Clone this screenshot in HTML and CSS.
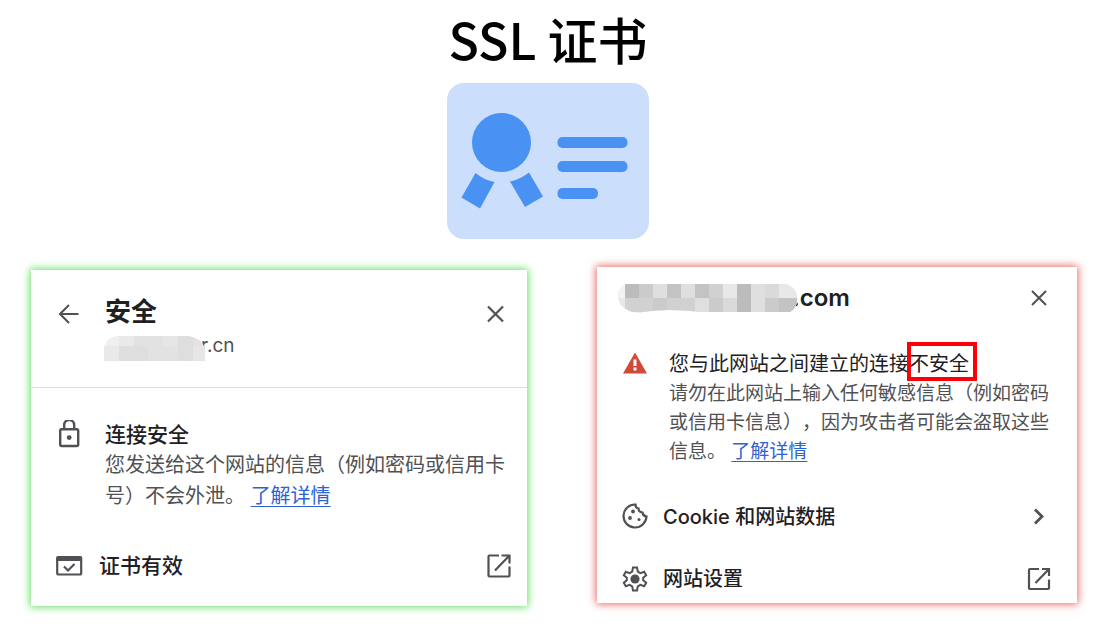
FILE: index.html
```html
<!DOCTYPE html>
<html lang="zh-CN">
<head>
  <meta charset="UTF-8">
  <meta name="viewport" content="width=device-width, initial-scale=1.0">
  <title>SSL 证书</title>
  <link rel="stylesheet" href="styles.css">
</head>
<body>
  <header class="hero">
    <h1>SSL 证书</h1>
    <svg class="certificate" viewBox="0 0 202 156" aria-hidden="true">
      <rect width="202" height="156" rx="17" fill="#cbdefc"/>
      <g fill="#4a91f4">
        <circle cx="54.500" cy="59.500" r="29.500"/>
        <path d="M28.500 90Q37 97 47.500 99L33 125.500 14.500 114.500Z"/>
        <path d="M82 89.500Q73 96.500 63 98.500L78 124 96 113.500Z"/>
        <rect x="110.500" y="54" width="70" height="11" rx="5"/>
        <rect x="110.500" y="78" width="70" height="11" rx="5"/>
        <rect x="110.500" y="105" width="40.500" height="11" rx="5"/>
      </g>
    </svg>
  </header>

  <main class="cards">
    <section class="card secure">
      <div class="card-head">
        <button class="icon-btn" type="button" aria-label="返回">
          <svg class="icon" viewBox="0 0 28 28"><path d="M23.500 14H5.500M14 5L5 14l9 9" stroke-width="2"/></svg>
        </button>
        <div class="card-title">
          <h2>安全</h2>
          <p class="domain">
            <svg class="mask" viewBox="0 0 101 25" aria-hidden="true">
              <clipPath id="mask-cn"><path d="M0 25V11Q4 0 16 0H83Q101 2 101 16V25Z"/></clipPath>
              <g clip-path="url(#mask-cn)">
                <path fill="#e2e2e2" d="M0 0h101v25H0z"/>
                <path fill="#efefef" d="M0 0h15v10H0z"/>
                <path fill="#e9e9e9" d="M15 0h15v10H15zM0 10h15v15H0z"/>
                <path fill="#dedede" d="M15 10h29v15H15zM74 0h15v25H74z"/>
                <path fill="#e6e6e6" d="M59 0h15v10H59zM89 10h12v15H89z"/>
              </g>
            </svg>r.cn
          </p>
        </div>
        <button class="icon-btn" type="button" aria-label="关闭">
          <svg class="icon" viewBox="0 0 28 28"><path d="M6 6.500l15 15M21 6.500l-15 15" stroke-width="2.200"/></svg>
        </button>
      </div>

      <div class="info">
        <svg class="icon" viewBox="0 0 28 28" aria-hidden="true">
          <rect x="5.200" y="9.200" width="18" height="16.800" rx="1.500" stroke-width="2.400"/>
          <path d="M9.200 9V5a5 5 0 0 1 10 0v4" stroke-width="2.400"/>
          <circle class="solid" cx="14.200" cy="17.600" r="2.400"/>
        </svg>
        <div>
          <h3>连接安全</h3>
          <p>您发送给这个网站的信息（例如密码或信用卡号）不会外泄。 <a href="#">了解详情</a></p>
        </div>
      </div>

      <button class="row" type="button">
        <svg class="icon" viewBox="0 0 28 28" aria-hidden="true">
          <rect x="2.200" y="5" width="24" height="17.500" rx="1.500" stroke-width="2.200"/>
          <path class="solid" d="M1.500 4.500h25.500V9H1.500z"/>
          <path d="M9 14.500l4 4 6.500-6.500" stroke-width="2.200"/>
        </svg>
        <span>证书有效</span>
        <svg class="icon" viewBox="0 0 28 28" aria-hidden="true"><path d="M14 3.500H4.500a1 1 0 0 0-1 1v19a1 1 0 0 0 1 1h19a1 1 0 0 0 1-1V14.500M16.500 3.500h8V11.500M24.500 3.500L10 18.500" stroke-width="2.200"/></svg>
      </button>
    </section>

    <section class="card insecure">
      <div class="card-head">
        <h2 class="host">
          <svg class="mask" viewBox="0 0 182 29" aria-hidden="true">
            <clipPath id="mask-com"><path d="M10 0H168C178 2 182 8 181 16Q181 24 174 28H86Q50 24 27 28Q13 30 5 21Q-3 7 10 0Z"/></clipPath>
            <g clip-path="url(#mask-com)">
              <path fill="#dadada" d="M0 0h182v29H0z"/>
              <path fill="#f3f3f3" d="M0 0h9v14H0z"/>
              <path fill="#e8e8e8" d="M0 14h9v15H0zM107 0h14v14h-14zM163 0h19v14h-19z"/>
              <path fill="#bcbcbc" d="M9 0h14v14H9zM121 0h14v29h-14z"/>
              <path fill="#cbcbcb" d="M23 0h14v14H23zM37 14h14v15H37zM93 14h14v15H93zM149 14h14v15h-14z"/>
              <path fill="#c3c3c3" d="M51 0h14v14H51zM79 0h14v14H79zM163 14h19v15h-19z"/>
              <path fill="#d1d1d1" d="M9 14h28v15H9zM51 14h28v15H51zM93 0h14v14H93z"/>
              <path fill="#dfdfdf" d="M37 0h14v14H37zM65 0h14v14H65zM79 14h14v15H79zM135 0h14v29h-14z"/>
            </g>
          </svg>.com
        </h2>
        <button class="icon-btn" type="button" aria-label="关闭">
          <svg class="icon" viewBox="0 0 28 28"><path d="M7 7l14 14M21 7l-14 14" stroke-width="2"/></svg>
        </button>
      </div>

      <div class="info">
        <svg class="icon" viewBox="0 0 28 28" aria-hidden="true">
          <path fill="#d04a37" stroke="none" d="M14 3.500l12 21H2z"/>
          <path fill="#fff" stroke="none" d="M12.500 10.500h3V17h-3zM12.500 18.500h3v3h-3z"/>
        </svg>
        <div>
          <h3>您与此网站之间建立的连接<span class="mark">不安全</span></h3>
          <p>请勿在此网站上输入任何敏感信息（例如密码或信用卡信息），因为攻击者可能会盗取这些信息。 <a href="#">了解详情</a></p>
        </div>
      </div>

      <button class="row" type="button">
        <svg class="icon" viewBox="0 0 28 28" aria-hidden="true">
          <path d="M14.500 2.500A11.500 11.500 0 1 0 25.500 14.500Q22 14 21.500 10.500Q17.500 10 17.500 6.500Q14.500 6 14.500 2.500z" transform="translate(0 -1)" stroke-width="2.200"/>
          <circle class="solid" cx="12" cy="8.500" r="1.900"/>
          <circle class="solid" cx="9" cy="15" r="1.900"/>
          <circle class="solid" cx="18" cy="16.500" r="1.500"/>
        </svg>
        <span>Cookie 和网站数据</span>
        <svg class="icon" viewBox="0 0 28 28" aria-hidden="true"><path d="M10 6.500l7 7-7 7" stroke-width="2.800"/></svg>
      </button>

      <button class="row" type="button">
        <svg class="icon" viewBox="0 0 28 28" aria-hidden="true">
          <path d="M12 2.500h4l.8 4.200 2.600 1.500 3.800-1.400 2 3.400-3 2.600v2.400l3 2.600-2 3.400-3.800-1.400-2.600 1.500-.8 4.200h-4l-.8-4.200-2.600-1.500-3.800 1.400-2-3.400 3-2.600v-2.400l-3-2.600 2-3.400 3.800 1.400 2.600-1.500z" stroke-width="2"/>
          <circle class="solid" cx="14" cy="14" r="4.600"/>
        </svg>
        <span>网站设置</span>
        <svg class="icon" viewBox="0 0 28 28" aria-hidden="true"><path d="M14 4H5a1 1 0 0 0-1 1v18a1 1 0 0 0 1 1h18a1 1 0 0 0 1-1V14.500M17 4h7V11M24 4L10.500 18" stroke-width="2.200"/></svg>
      </button>
    </section>
  </main>
</body>
</html>
```

FILE: styles.css
```css
* {
  box-sizing: border-box;
}
body {
  margin: 0;
  background: #fff;
  color: #1f2023;
  font-family: Inter, "Noto Sans CJK SC", sans-serif;
  text-spacing-trim: space-all;
}
h1, h2, h3, p {
  margin: 0;
  font-weight: 500;
}
button {
  padding: 0;
  border: none;
  background: none;
  color: inherit;
  font: inherit;
  text-align: left;
  cursor: pointer;
}
a {
  color: #2f62d0;
  text-decoration-thickness: 1px;
  text-underline-offset: 3px;
}

.hero {
  display: flex;
  flex-direction: column;
  align-items: center;
  padding: 8px 6px 28px 0;
}
.hero h1 {
  color: #000;
  font-family: "Noto Sans CJK SC", sans-serif;
  font-size: 50px;
  line-height: 60px;
  margin-bottom: 15px;
}
.certificate {
  width: 202px;
  height: 156px;
}

.cards {
  display: grid;
  grid-template-columns: 31fr 30fr;
  column-gap: 70px;
  align-items: start;
  padding: 0 25px 20px 31px;
}
.card {
  background: #fff;
}
.secure {
  margin-top: 3px;
  padding-bottom: 25px;
  box-shadow: 0 0 8px 1px #62df62;
}
.insecure {
  padding-bottom: 9px;
  box-shadow: 0 0 8px 1px #ea6464;
}

.icon {
  display: block;
  flex: none;
  width: 28px;
  height: 28px;
  fill: none;
  stroke: #505154;
}
.icon .solid {
  fill: #505154;
  stroke: none;
}
.mask {
  position: relative;
  flex: none;
}

.card-head {
  display: flex;
}
.card-head h2 {
  line-height: 34px;
}
.secure .card-head {
  gap: 22px;
  padding: 25px 17px 24px 24px;
  border-bottom: 1px solid #cfdffa;
}
.secure .icon-btn {
  align-self: flex-start;
  margin-top: 5px;
}
.card-title {
  flex: 1;
}
.card-title h2 {
  font-size: 26px;
  font-weight: 700;
}
.domain {
  display: flex;
  align-items: center;
  color: #505154;
  font-size: 19px;
  font-weight: 400;
  line-height: 34px;
}
.domain .mask {
  width: 101px;
  height: 25px;
  margin: 4px -4px 0 -1px;
}
.insecure .card-head {
  align-items: center;
  justify-content: space-between;
  padding: 14px 24px 0 19px;
}
.host {
  display: flex;
  align-items: center;
  font-size: 24px;
  font-weight: 600;
}
.host .mask {
  width: 182px;
  height: 29px;
  margin-right: -6px;
}

.info {
  display: flex;
}
.info h3 {
  line-height: 30px;
}
.info p {
  color: #505154;
  font-weight: 400;
}
.secure .info {
  gap: 22px;
  padding: 32px 24px 0;
}
.secure .info h3 {
  font-size: 21px;
}
.secure .info p {
  font-size: 20px;
  line-height: 31px;
  margin-right: -8px;
}
.insecure .info {
  gap: 20px;
  padding: 34px 24px 0;
}
.insecure .info h3 {
  font-size: 20px;
  font-weight: 400;
}
.insecure .info p {
  font-size: 19px;
  line-height: 29px;
}

/* red frame around the warning words */
.mark {
  position: relative;
}
.mark::after {
  content: "";
  position: absolute;
  inset: -10px -8px -5px -2px;
  border: 4px solid #fb0007;
}

.row {
  display: flex;
  align-items: center;
  width: 100%;
  font-weight: 500;
  line-height: 30px;
}
.row span {
  flex: 1;
}
.secure .row {
  gap: 16px;
  margin-top: 39px;
  padding: 0 14px 0 24px;
  font-size: 21px;
}
.insecure .row {
  gap: 14px;
  margin-top: 32px;
  padding: 0 24px;
  font-size: 20px;
}
.insecure .info + .row {
  margin-top: 36px;
}
```
